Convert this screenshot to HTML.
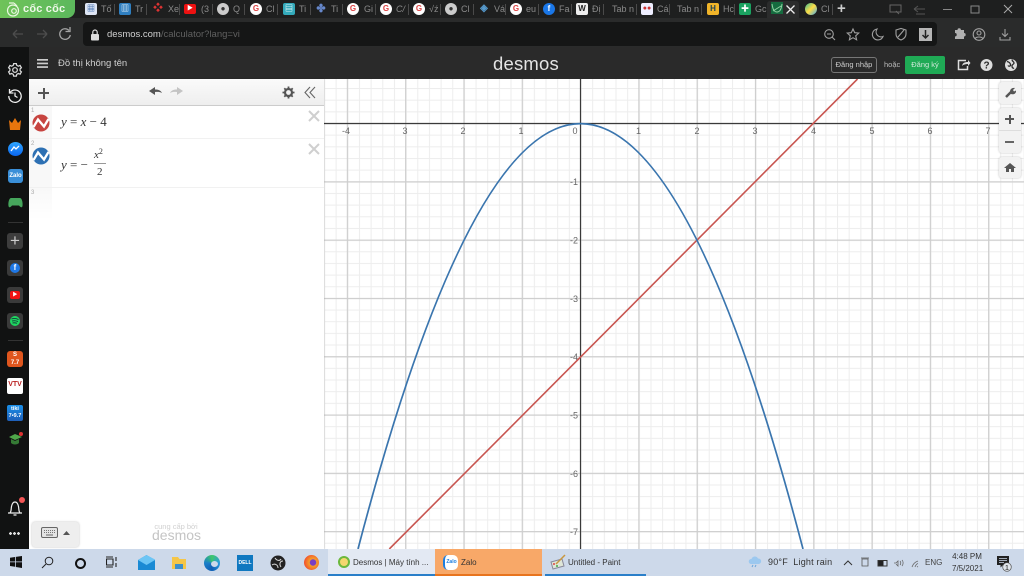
<!DOCTYPE html>
<html><head><meta charset="utf-8">
<style>
html,body{margin:0;padding:0;width:1024px;height:576px;overflow:hidden;background:#fff;font-family:"Liberation Sans","Noto Sans CJK SC",sans-serif}
#w{position:absolute;left:0;top:0;width:1024px;height:576px;overflow:hidden;filter:blur(.35px)}
.a{position:absolute}
#tabs{left:0;top:0;width:1024px;height:18px;background:#1e1f1f}
.t{position:absolute;top:3px;font-size:9px;color:#8a8a8a;line-height:12px;white-space:nowrap}
.i{position:absolute;top:3px;width:12px;height:12px;border-radius:2px;text-align:center;font-size:8px;line-height:12px;color:#fff;font-weight:bold}
.c{border-radius:50%}
.sep{position:absolute;top:4px;width:1px;height:11px;background:#4a4a4a}
#tb{left:0;top:549px;width:1024px;height:27px;background:#cdd9ea}
.tt{position:absolute;font-size:8px;color:#333;line-height:10px;white-space:nowrap}
svg text{font-family:"Liberation Sans",sans-serif}
.m{font-family:"Liberation Serif",serif;font-size:13px;color:#333;position:absolute;white-space:nowrap}
</style></head><body><div id="w">

<div class="a" id="tabs">
<div class="a" style="left:0;top:0;width:75px;height:18px;background:linear-gradient(90deg,#6fc35a,#5cb85c);border-radius:0 0 8px 0"></div>
<svg class="a" style="left:5px;top:1px" width="16" height="16" viewBox="0 0 16 16" fill="none" stroke="#eaf7e0" stroke-width="1.2"><circle cx="8" cy="9.5" r="5.5"/><circle cx="9" cy="10" r="2.3"/><path d="M4 2h5M9 2l3 3"/></svg>
<div class="a" style="left:23px;top:2px;font-size:11px;font-weight:bold;color:#eef8e8;line-height:15px;letter-spacing:.2px">cốc cốc</div>

<div class="i" style="left:85px;background:#dfe6f5;color:#36a">▦</div><div class="t" style="left:101px">Tố</div><div class="sep" style="left:114px"></div>
<div class="i" style="left:119px;background:#2f7fc1">▥</div><div class="t" style="left:135px">Tr</div><div class="sep" style="left:146px"></div>
<div class="i" style="left:152px;color:#d33;font-size:10px">❖</div><div class="t" style="left:168px">Xe</div><div class="sep" style="left:179px"></div>
<div class="i" style="left:184px;background:#e11;color:#fff;font-size:6px;top:4px;height:10px;line-height:10px">▶</div><div class="t" style="left:201px">(3</div><div class="sep" style="left:212px"></div>
<div class="i c" style="left:217px;background:#ccc;color:#333">●</div><div class="t" style="left:233px">Q</div><div class="sep" style="left:244px"></div>
<div class="i c" style="left:250px;background:#fff;color:#d44">G</div><div class="t" style="left:266px">Cl</div><div class="sep" style="left:277px"></div>
<div class="i" style="left:283px;background:#3ab;color:#fff">▤</div><div class="t" style="left:299px">Ti</div><div class="sep" style="left:310px"></div>
<div class="i" style="left:315px;color:#68c;font-size:11px">✤</div><div class="t" style="left:331px">Ti</div><div class="sep" style="left:342px"></div>
<div class="i c" style="left:347px;background:#fff;color:#d44">G</div><div class="t" style="left:364px">Gi</div><div class="sep" style="left:375px"></div>
<div class="i c" style="left:380px;background:#fff;color:#d44">G</div><div class="t" style="left:396px;font-style:italic">C/</div><div class="sep" style="left:408px"></div>
<div class="i c" style="left:413px;background:#fff;color:#d44">G</div><div class="t" style="left:429px">√ź</div><div class="sep" style="left:440px"></div>
<div class="i c" style="left:445px;background:#ccc;color:#333">●</div><div class="t" style="left:461px">Cl</div><div class="sep" style="left:473px"></div>
<div class="i" style="left:478px;color:#59c;font-size:10px">◈</div><div class="t" style="left:494px">Vá</div><div class="sep" style="left:505px"></div>
<div class="i c" style="left:510px;background:#fff;color:#d44">G</div><div class="t" style="left:526px">eu</div><div class="sep" style="left:538px"></div>
<div class="i c" style="left:543px;background:#1a77e8">f</div><div class="t" style="left:559px">Fa</div><div class="sep" style="left:571px"></div>
<div class="i" style="left:576px;background:#eee;color:#222">W</div><div class="t" style="left:592px">Đị</div><div class="sep" style="left:603px"></div>
<div class="t" style="left:612px">Tab n</div><div class="sep" style="left:636px"></div>
<div class="i" style="left:641px;background:#eef;color:#c33;font-size:7px">●●</div><div class="t" style="left:657px">Cá</div><div class="sep" style="left:669px"></div>
<div class="t" style="left:677px">Tab n</div><div class="sep" style="left:701px"></div>
<div class="i" style="left:707px;background:#f0b429;color:#245">H</div><div class="t" style="left:723px">Hc</div><div class="sep" style="left:734px"></div>
<div class="i" style="left:739px;background:#1aa260">✚</div><div class="t" style="left:755px">Gc</div>
<div class="a" style="left:767px;top:1px;width:32px;height:17px;background:#2b2c2c;border-radius:3px 3px 0 0"></div>
<svg class="a" style="left:771px;top:2px" width="12" height="12" viewBox="0 0 12 12"><rect width="12" height="12" fill="#156b3f"/><path d="M1 2c1 7 3 8 5 8s4-1 5-8M2 9l8-5" stroke="#8fd0a0" fill="none"/></svg>
<svg class="a" style="left:785px;top:4px" width="11" height="11" viewBox="0 0 11 11"><path d="M1.500 1.500l8 8M9.500 1.500l-8 8" stroke="#eee" stroke-width="1.300"/></svg>
<div class="i c" style="left:805px;background:linear-gradient(135deg,#3b9,#fd4 50%,#4ae)"></div><div class="t" style="left:821px">Cl</div><div class="sep" style="left:832px"></div>
<div class="a" style="left:837px;top:0;color:#ccc;font-size:15px;line-height:18px;font-weight:bold">+</div>
<svg class="a" style="left:887px;top:3px" width="135" height="13" viewBox="0 0 135 13" fill="none"><path d="M3 2h11v7H3zM9 8l3 3" stroke="#666"/><path d="M27 6h11M27 6l4-3M27 6l4 3M29 11h9" stroke="#555"/><path d="M56 6.500h9" stroke="#888"/><path d="M84 3h8v7h-8z" stroke="#888"/><path d="M117 2l8 8M125 2l-8 8" stroke="#aaa"/></svg>
</div>

<div class="a" style="left:0;top:18px;width:1024px;height:29px;background:#2a2b2b"></div>
<svg class="a" style="left:10px;top:26px" width="64" height="16" viewBox="0 0 64 16" fill="none"><path d="M3 8h10M3 8l4-4M3 8l4 4" stroke="#4d4d4d" stroke-width="1.300"/><path d="M27 8h10M37 8l-4-4M37 8l-4 4" stroke="#4d4d4d" stroke-width="1.300"/><path d="M59 4.500A5.300 5.300 0 1 0 60.300 9" stroke="#a5a5a5" stroke-width="1.300"/><path d="M60 1v4.500h-4.500" stroke="#a5a5a5" stroke-width="1.300"/></svg>
<div class="a" style="left:83px;top:22px;width:854px;height:24px;background:#151616;border-radius:4px"></div>
<svg class="a" style="left:90px;top:29px" width="10" height="12" viewBox="0 0 10 12"><rect x="1" y="5" width="8" height="6.500" rx="1" fill="#ddd"/><path d="M2.800 5V3.200a2.200 2.200 0 0 1 4.400 0V5" stroke="#ddd" fill="none" stroke-width="1.200"/></svg>
<div class="a" style="left:107px;top:29px;font-size:9.500px;line-height:12px;color:#d0d0d0;white-space:nowrap">desmos.com<span style="color:#606060">/calculator?lang=vi</span></div>
<svg class="a" style="left:822px;top:26px" width="200" height="18" viewBox="0 0 200 18" fill="none" stroke="#a0a0a0" stroke-width="1.100"><circle cx="7" cy="8" r="4.300"/><path d="M10 11l3 3M5 8h4"/><path d="M31 3l1.700 3.700 4 .4-3 2.700.9 4-3.600-2.100-3.600 2.100.9-4-3-2.700 4-.4z"/><path d="M55 3a5.500 5.500 0 1 0 6 7.500A5 5 0 0 1 55 3z"/><path d="M74 4l5-1.500L84 4v4c0 3-2.500 5-5 6-2.500-1-5-3-5-6zM76 11l6-7"/><rect x="97" y="2" width="13" height="13" fill="#b5b5b5" stroke="none"/><path d="M103.500 4v8M100.500 9l3 3 3-3" stroke="#222" stroke-width="1.500"/><path d="M131 5h2.500a1.700 1.700 0 0 1 3.400 0H140v3a1.700 1.700 0 0 1 0 3.400V14h-9v-2.600a1.700 1.700 0 0 0 0-3.400z" fill="#b0b0b0" stroke="none" transform="translate(2 -1)"/><circle cx="157" cy="8.500" r="5.800"/><circle cx="157" cy="7" r="2"/><path d="M153 12.500c1.500-2 6.500-2 8 0"/><path d="M183 3v7M180 7.500l3 3 3-3M178 11v3h10v-3"/></svg>

<div class="a" style="left:0;top:47px;width:1024px;height:32px;background:#2a2a2a"></div>
<svg class="a" style="left:37px;top:59px" width="12" height="10" viewBox="0 0 12 10" fill="#ccc"><rect width="11" height="1.700" y="0"/><rect width="11" height="1.700" y="3.600"/><rect width="11" height="1.700" y="7.200"/></svg>
<div class="a" style="left:58px;top:58px;font-size:9.500px;line-height:12px;color:#d0d0d0">Đồ thị không tên</div>
<div class="a" style="left:493px;top:53px;font-size:18.500px;line-height:22px;color:#e4e4e4;letter-spacing:.2px">desmos</div>
<div class="a" style="left:831px;top:57px;width:46px;height:16px;box-sizing:border-box;border:1px solid #777;border-radius:3px;font-size:7.500px;line-height:14px;text-align:center;color:#ccc">Đăng nhập</div>
<div class="a" style="left:884px;top:60px;font-size:7.500px;line-height:10px;color:#bbb">hoặc</div>
<div class="a" style="left:905px;top:56px;width:40px;height:18px;background:#1faa55;border-radius:2px;font-size:7.500px;line-height:18px;text-align:center;color:#cfe8d8">Đăng ký</div>
<svg class="a" style="left:956px;top:57px" width="62" height="16" viewBox="0 0 62 16"><path d="M10 3.500H2.500v9h9V9" fill="none" stroke="#ddd" stroke-width="1.500"/><path d="M6 9c.5-3 2.500-4 6-4V3l2.500 3L12 9V7c-2.500 0-4.500 .5-6 2z" fill="#ddd"/><circle cx="30.500" cy="8" r="6" fill="#ddd"/><text x="30.500" y="11.500" font-size="10" font-weight="bold" text-anchor="middle" fill="#2a2a2a">?</text><circle cx="55" cy="8" r="6" fill="#ddd"/><path d="M51 4.500c2 .5 3 1 3.500 3s-2 2-2.500 1M56 2.500c0 2 2 2 2 3.500s-2 1-2 3 1 2.500 2 2" stroke="#2a2a2a" fill="none" stroke-width="1.300"/></svg>

<!-- left browser sidebar -->
<div class="a" style="left:0;top:47px;width:29px;height:502px;background:#111212"></div>
<svg class="a" style="left:7px;top:62px" width="16" height="16" viewBox="0 0 18 18" fill="none" stroke="#ddd" stroke-width="1.400"><circle cx="9" cy="9" r="2.600"/><path d="M7.500 1.800h3l.5 2 1.800.9 1.900-.8 1.500 2.600-1.500 1.300v2l1.500 1.300-1.500 2.600-1.900-.8-1.800 1-.5 2h-3l-.5-2-1.800-1-1.900.8-1.500-2.600 1.500-1.300v-2L1.800 6.500l1.500-2.600 1.900.8L7 3.800z"/></svg>
<svg class="a" style="left:7px;top:88px" width="16" height="16" viewBox="0 0 16 16" fill="none" stroke="#eee" stroke-width="1.300"><path d="M3 4.500A6.200 6.200 0 1 1 1.800 8"/><path d="M2.500 1v4h4M8 4.500V8l2.500 1.500"/></svg>
<svg class="a" style="left:8px;top:117px" width="14" height="14" viewBox="0 0 14 14"><path d="M1 3l3 3 3-5 3 5 3-3-1 10H2z" fill="#e8750d"/></svg>
<div class="a" style="left:8px;top:142px;width:15px;height:14px;border-radius:50%;background:linear-gradient(#2fa6ff,#0a66f0)"></div>
<svg class="a" style="left:10px;top:145px" width="11" height="8" viewBox="0 0 11 8"><path d="M1 6l3-4 2 2 3-3" stroke="#fff" fill="none" stroke-width="1.300"/></svg>
<div class="a" style="left:8px;top:169px;width:15px;height:14px;border-radius:3px;background:#3a8fd8;color:#fff;font-size:6px;line-height:14px;text-align:center;font-weight:bold">Zalo</div>
<svg class="a" style="left:8px;top:197px" width="15" height="11" viewBox="0 0 15 11"><path d="M3 1h9c2 0 3 5 2.500 8-.5 2-2 1.500-3.500-.5H4c-1.500 2-3 2.500-3.500.5C0 6 1 1 3 1z" fill="#46a65c"/></svg>
<div class="a" style="left:8px;top:222px;width:15px;height:1px;background:#333"></div>
<div class="a" style="left:7px;top:233px;width:16px;height:16px;border-radius:3px;background:#3d3d3d;color:#ccc;font-size:17px;line-height:15px;text-align:center">+</div>
<div class="a" style="left:7px;top:260px;width:16px;height:16px;border-radius:3px;background:#3a3a3a"></div><div class="a" style="left:10px;top:263px;width:10px;height:10px;border-radius:50%;background:#1f78e6;color:#fff;font-size:8px;line-height:10px;text-align:center;font-weight:bold">f</div>
<div class="a" style="left:7px;top:287px;width:16px;height:16px;border-radius:3px;background:#3a3a3a"></div><div class="a" style="left:10px;top:291px;width:10px;height:8px;border-radius:2px;background:#f01414;color:#fff;font-size:5px;line-height:8px;text-align:center">▶</div>
<div class="a" style="left:7px;top:313px;width:16px;height:16px;border-radius:3px;background:#3a3a3a"></div><div class="a" style="left:10px;top:316px;width:10px;height:10px;border-radius:50%;background:#1ed760"></div><svg class="a" style="left:11px;top:318px" width="8" height="6" viewBox="0 0 8 6"><path d="M.5 1c2-.7 5-.5 7 .5M1 3c2-.5 4-.3 6 .5M1.500 5c1.500-.3 3-.2 4.500.3" stroke="#123" fill="none" stroke-width=".8"/></svg>
<div class="a" style="left:8px;top:340px;width:15px;height:1px;background:#333"></div>
<div class="a" style="left:7px;top:351px;width:16px;height:16px;border-radius:3px;background:#e0561e;color:#fff;font-size:6px;line-height:8px;text-align:center;font-weight:bold"><span style="display:block">S</span>7.7</div>
<div class="a" style="left:7px;top:378px;width:16px;height:16px;border-radius:2px;background:#fff;color:#b22;font-size:7px;line-height:14px;text-align:center;font-weight:bold">VTV</div>
<div class="a" style="left:7px;top:405px;width:16px;height:16px;border-radius:2px;background:linear-gradient(#1a8fe8,#1f5fb8);color:#fff;font-size:5.500px;line-height:7px;text-align:center;font-weight:bold;padding-top:1px;box-sizing:border-box">tiki<br>7•9.7</div>
<svg class="a" style="left:8px;top:431px" width="15" height="16" viewBox="0 0 15 16"><path d="M1 6l6-3 7 3-7 3z" fill="#4fa64a"/><path d="M3 8v4c2 2 6 2 8 0V8l-4 2z" fill="#357a35"/><circle cx="13" cy="3" r="2" fill="#d33"/></svg>
<svg class="a" style="left:6px;top:499px" width="18" height="18" viewBox="0 0 18 18" fill="none" stroke="#eee" stroke-width="1.200"><path d="M2 14h14M4 14c1.500-2 1-4 1.500-6.500S7 3 9 3s3 2 3.500 4.500 0 4.500 1.500 6.500M7.500 16h3"/></svg>
<div class="a" style="left:19px;top:497px;width:6px;height:6px;border-radius:50%;background:#f25555"></div>
<div class="a" style="left:9px;top:532px;width:12px;height:3px;background:radial-gradient(circle at 1.500px 1.500px,#ddd 1.300px,transparent 1.500px) 0 0/4px 3px repeat-x"></div>

<!-- graph -->
<svg class="a" style="left:324px;top:79px" width="700" height="470" viewBox="324 79 700 470" xmlns="http://www.w3.org/2000/svg">
<defs>
<pattern id="mx" x="580.5" y="0" width="11.66" height="470" patternUnits="userSpaceOnUse"><rect x="0" width="1" height="470" fill="#ededed"/></pattern>
<pattern id="my" x="0" y="123" width="700" height="11.66" patternUnits="userSpaceOnUse"><rect y="0" width="700" height="1" fill="#ededed"/></pattern>
<pattern id="Mx" x="580" y="0" width="58.3" height="470" patternUnits="userSpaceOnUse"><rect x="0" width="1.200" height="470" fill="#cdcdcd"/></pattern>
<pattern id="My" x="0" y="123" width="700" height="58.3" patternUnits="userSpaceOnUse"><rect y="0" width="700" height="1.200" fill="#cdcdcd"/></pattern>
</defs>
<rect x="324" y="79" width="700" height="470" fill="#fff"/>
<rect x="324" y="79" width="700" height="470" fill="url(#mx)"/>
<rect x="324" y="79" width="700" height="470" fill="url(#my)"/>
<rect x="324" y="79" width="700" height="470" fill="url(#Mx)"/>
<rect x="324" y="79" width="700" height="470" fill="url(#My)"/>
<path d="M324 123.500H1024M580.500 79V549" stroke="#3a3a3a" stroke-width="1.200" fill="none"/>
<g font-size="9" fill="#666" text-anchor="middle">
<text x="346" y="134">-4</text><text x="405" y="134">3</text><text x="463" y="134">2</text><text x="521" y="134">1</text><text x="575" y="134">0</text>
<text x="638.500" y="134">1</text><text x="697" y="134">2</text><text x="755" y="134">3</text><text x="813.500" y="134">4</text><text x="872" y="134">5</text><text x="930" y="134">6</text><text x="988" y="134">7</text>
</g>
<g font-size="9" fill="#666" text-anchor="end">
<text x="578" y="185">-1</text><text x="578" y="243.500">-2</text><text x="578" y="302">-3</text><text x="578" y="360">-4</text><text x="578" y="418.500">-5</text><text x="578" y="477">-6</text><text x="578" y="535">-7</text>
</g>
<path d="M389.300 549L857.500 79" stroke="#c85550" stroke-width="1.600" fill="none"/>
<path d="M358 549Q580.500 -301.700 803 549" stroke="#3a75ae" stroke-width="1.700" fill="none"/>
</svg>

<!-- controls -->
<div class="a" style="left:999px;top:82px;width:22px;height:22px;background:#f2f2f2;border-radius:3px;box-shadow:0 0 2px rgba(0,0,0,.25)"></div>
<svg class="a" style="left:1004px;top:86px" width="13" height="13" viewBox="0 0 13 13"><path d="M2 11L7 6" stroke="#555" stroke-width="2.500"/><path d="M6 6c0-3 2-4.500 5-4L9 4l1 1.500 2-1c.3 3-2 4.500-5 3.500z" fill="#555"/></svg>
<div class="a" style="left:999px;top:108px;width:22px;height:45px;background:#f2f2f2;border-radius:3px;box-shadow:0 0 2px rgba(0,0,0,.25)"></div>
<div class="a" style="left:999px;top:130px;width:22px;height:1px;background:#ddd"></div>
<div class="a" style="left:1005px;top:118px;width:9px;height:2px;background:#555"></div><div class="a" style="left:1008.500px;top:114.500px;width:2px;height:9px;background:#555"></div>
<div class="a" style="left:1005px;top:141px;width:9px;height:2px;background:#666"></div>
<div class="a" style="left:999px;top:157px;width:22px;height:21px;background:#f2f2f2;border-radius:3px;box-shadow:0 0 2px rgba(0,0,0,.25)"></div>
<svg class="a" style="left:1004px;top:162px" width="12" height="11" viewBox="0 0 12 11"><path d="M6 1L0 6h2v4h3V7h2v3h3V6h2z" fill="#555"/></svg>

<!-- expression panel -->
<div class="a" style="left:29px;top:79px;width:295px;height:470px;background:#fff;box-shadow:0 0 2px rgba(0,0,0,.2)"></div>
<div class="a" style="left:29px;top:79px;width:295px;height:27px;background:linear-gradient(#fafafa,#eeeeee);border-bottom:1px solid #ccc;box-sizing:border-box"></div>
<div class="a" style="left:38px;top:92px;width:11px;height:2px;background:#555"></div><div class="a" style="left:42.500px;top:87.500px;width:2px;height:11px;background:#555"></div>
<svg class="a" style="left:147px;top:85px" width="38" height="13" viewBox="0 0 38 13"><path d="M2 6l6-4v2.500c3 0 6 .8 7 3.500-1.500-1-4-1.200-7-1V10z" fill="#555"/><path d="M36 6l-6-4v2.500c-3 0-6 .8-7 3.500 1.500-1 4-1.200 7-1V10z" fill="#c4c4c4"/></svg>
<svg class="a" style="left:282px;top:86px" width="13" height="13" viewBox="0 0 13 13"><circle cx="6.500" cy="6.500" r="3.500" fill="none" stroke="#555" stroke-width="2.200"/><path d="M6.500 .5v2.500M6.500 10v2.500M.5 6.500H3M10 6.500h2.500M2.300 2.300l1.800 1.800M8.900 8.900l1.800 1.800M2.300 10.700l1.800-1.800M8.900 4.100l1.800-1.800" stroke="#555" stroke-width="1.800"/></svg>
<svg class="a" style="left:304px;top:86px" width="12" height="13" viewBox="0 0 12 13" fill="none" stroke="#666" stroke-width="1.100"><path d="M6 1L1 6.500 6 12M11 1L6 6.500 11 12"/></svg>

<div class="a" style="left:29px;top:106px;width:23px;height:82px;background:#f8f8f8"></div>
<div class="a" style="left:29px;top:188px;width:23px;height:32px;background:linear-gradient(#f8f8f8,#fff)"></div>
<div class="a" style="left:29px;top:138px;width:295px;height:1px;background:#f1f1f1"></div>
<div class="a" style="left:29px;top:187px;width:295px;height:1px;background:#f1f1f1"></div>
<div class="a" style="left:31px;top:108px;font-size:6px;line-height:7px;color:#aaa">1</div>
<div class="a" style="left:31px;top:141px;font-size:6px;line-height:7px;color:#aaa">2</div>
<div class="a" style="left:31px;top:190px;font-size:6px;line-height:7px;color:#aaa">3</div>
<svg class="a" style="left:32px;top:114px" width="18" height="18" viewBox="0 0 18 18"><circle cx="9" cy="9" r="8.500" fill="#c74440"/><path d="M1.500 13L6 5.500 12 12.500 16.500 5" stroke="#fff" fill="none" stroke-width="2.300"/></svg>
<svg class="a" style="left:32px;top:147px" width="18" height="18" viewBox="0 0 18 18"><circle cx="9" cy="9" r="8.500" fill="#2d70b3"/><path d="M1.500 13L6 5.500 12 12.500 16.500 5" stroke="#fff" fill="none" stroke-width="2.300"/></svg>
<div class="m" style="left:61px;top:114px;line-height:16px"><i>y</i> = <i>x</i> − 4</div>
<div class="m" style="left:61px;top:157px;line-height:16px"><i>y</i> = −</div>
<div class="m" style="left:94px;top:149px;font-size:11px;line-height:12px"><i>x</i><sup style="font-size:8px;line-height:0;vertical-align:4px">2</sup></div>
<div class="a" style="left:94px;top:163px;width:12px;height:1px;background:#999"></div>
<div class="m" style="left:97px;top:166px;font-size:11px;line-height:12px">2</div>
<svg class="a" style="left:307px;top:109px" width="14" height="50" viewBox="0 0 14 50" stroke="#cfcfcf" stroke-width="2" fill="none"><path d="M2 2l10 10M12 2L2 12M2 35l10 10M12 35L2 45"/></svg>

<div class="a" style="left:32px;top:522px;width:47px;height:25px;background:#eee;border-radius:3px;box-shadow:0 0 2px rgba(0,0,0,.25)"></div>
<svg class="a" style="left:41px;top:527px" width="30" height="13" viewBox="0 0 30 13"><rect x=".5" y=".5" width="16" height="10" rx="1.500" fill="#e4e4e4" stroke="#666"/><path d="M3 3.500h11M3 5.500h11" stroke="#777" stroke-dasharray="1 1"/><path d="M5 8h7" stroke="#666"/><path d="M22 8l3.500-4L29 8z" fill="#555"/></svg>
<div class="a" style="left:152px;top:522px;width:48px;text-align:center;font-size:7.500px;line-height:9px;color:#d0d0d0">cung cấp bởi</div>
<div class="a" style="left:152px;top:527px;width:48px;text-align:center;font-size:14px;line-height:16px;color:#c4c4c4">desmos</div>

<!-- taskbar -->
<div class="a" id="tb"></div>
<svg class="a" style="left:10px;top:556px" width="12" height="12" viewBox="0 0 12 12" fill="#111"><path d="M0 1.800L5 1v4.500H0zM5.800.9L12 0v5.500H5.800zM0 6.300h5v4.500l-5-.8zM5.800 6.300H12V12l-6.200-1z"/></svg>
<svg class="a" style="left:41px;top:556px" width="13" height="13" viewBox="0 0 13 13" fill="none" stroke="#222"><circle cx="8" cy="5" r="3.800"/><path d="M5 8l-4 4"/></svg>
<div class="a" style="left:75px;top:558px;width:7px;height:7px;border:2px solid #111;border-radius:50%"></div>
<svg class="a" style="left:106px;top:556px" width="12" height="12" viewBox="0 0 12 12" fill="none" stroke="#222" stroke-width="1.100"><path d="M.5 3h6.500v6H.5zM0 1h7M0 11h7M10 1v4M10 7v4"/></svg>
<svg class="a" style="left:138px;top:555px" width="17" height="15" viewBox="0 0 17 15"><path d="M0 5l8.500-5L17 5v10H0z" fill="#1a8ad4"/><path d="M0 5l8.500 5L17 5v-.5L8.500 0z" fill="#6cc5f5"/></svg>
<svg class="a" style="left:171px;top:555px" width="16" height="15" viewBox="0 0 16 15"><path d="M1 2h6l1.500 2H15v10H1z" fill="#f5c648"/><rect x="4" y="9" width="8" height="5" fill="#3d8fcc"/></svg>
<div class="a" style="left:204px;top:555px;width:16px;height:16px;border-radius:50%;background:conic-gradient(#3ec76a,#2a9be0,#0f5fb5,#1a7fc9,#3ec76a)"></div>
<div class="a" style="left:211px;top:561px;width:7px;height:6px;border-radius:50%;background:#cdd9ea"></div>
<div class="a" style="left:237px;top:555px;width:16px;height:16px;background:#0f78c0;color:#fff;font-size:5px;line-height:16px;text-align:center;font-weight:bold">DELL</div>
<svg class="a" style="left:270px;top:555px" width="16" height="16" viewBox="0 0 16 16"><circle cx="8" cy="8" r="7.500" fill="#222"/><path d="M5 3c2 3 5 3 6 1M13 6c-3 0-4 3-2 6M8 13c0-3-3-5-6-3" stroke="#ddd" fill="none"/></svg>
<div class="a" style="left:304px;top:555px;width:15px;height:15px;border-radius:50%;background:radial-gradient(circle at 60% 50%,#7a3fc4 25%,#f5a12a 30%,#f2522c 75%)"></div>

<div class="a" style="left:328px;top:549px;width:107px;height:27px;background:#e3e9f3"></div>
<div class="a" style="left:328px;top:574px;width:107px;height:2px;background:#2a7fc9"></div>
<div class="a" style="left:435px;top:549px;width:107px;height:27px;background:#f8a868"></div>
<div class="a" style="left:435px;top:574px;width:107px;height:2px;background:#e8741e"></div>
<div class="a" style="left:545px;top:574px;width:101px;height:2px;background:#2a7fc9"></div>
<div class="a" style="left:338px;top:556px;width:12px;height:12px;border-radius:50%;border:2px solid #6cb83c;box-sizing:border-box;background:#f5d76e"></div>
<div class="tt" style="left:353px;top:558px">Desmos | Máy tính ...</div>
<div class="a" style="left:443px;top:555px;width:15px;height:15px;border-radius:5px;background:#fff;border-left:2px solid #1e7fe0;box-sizing:border-box;color:#1e7fe0;font-size:5px;line-height:14px;text-align:center;font-weight:bold">Zalo</div>
<div class="tt" style="left:461px;top:558px">Zalo</div>
<svg class="a" style="left:550px;top:554px" width="16" height="16" viewBox="0 0 16 16"><path d="M1 8l11-3 2 7-11 3z" fill="#dfe6d8" stroke="#889"/><path d="M6 10l9-9" stroke="#c9973f" stroke-width="1.500"/><circle cx="4" cy="10" r="1" fill="#d44"/><circle cx="7" cy="12" r="1" fill="#4a4"/></svg>
<div class="tt" style="left:568px;top:558px">Untitled - Paint</div>

<svg class="a" style="left:748px;top:556px" width="14" height="12" viewBox="0 0 14 12"><path d="M3 8a2.500 2.500 0 0 1 .5-5 3.500 3.500 0 0 1 6.500-.5A2.800 2.800 0 0 1 11 8z" fill="#9cc8ef"/><path d="M5 9l-1 2M8 9l-1 2" stroke="#6aa6dc"/></svg>
<div class="tt" style="left:768px;top:557px;font-size:9px;letter-spacing:.2px">90°F&nbsp; Light rain</div>
<svg class="a" style="left:843px;top:557px" width="98" height="12" viewBox="0 0 98 12" fill="none" stroke="#333"><path d="M1 8l4-4 4 4"/><path d="M19 2h6v7h-6zM18 1h8" stroke="#555" stroke-width=".8"/><rect x="35" y="3.500" width="9" height="5.500" stroke-width="1"/><rect x="35.500" y="4" width="5" height="4.500" fill="#222" stroke="none"/><path d="M51 6h2l2-2v5l-2-2M57 4c1 1 1 3 0 4M59 3c1.500 1.500 1.500 4 0 6" stroke="#666" stroke-width=".8"/><path d="M69 10c1-3 3-5 6-6M72 10c.5-1.500 1.500-3 3-3.500M75 10l-1-.5" stroke="#666" stroke-width=".8"/></svg>
<div class="tt" style="left:925px;top:558px;color:#444">ENG</div>
<div class="tt" style="left:952px;top:551px;width:30px;text-align:center;line-height:12px;color:#333">4:48 PM<br>7/5/2021</div>
<svg class="a" style="left:996px;top:555px" width="18" height="18" viewBox="0 0 18 18"><path d="M1 1h12v9H7l-2.500 2.500V10H1z" fill="#222"/><path d="M3 3.500h8M3 5.500h8M3 7.500h5" stroke="#cdd9ea" stroke-width=".7"/><circle cx="11" cy="12" r="4.300" fill="#dfe4ea" stroke="#555" stroke-width=".7"/><text x="11" y="15" font-size="7.500" text-anchor="middle" fill="#222">1</text></svg>
</div></body></html>
